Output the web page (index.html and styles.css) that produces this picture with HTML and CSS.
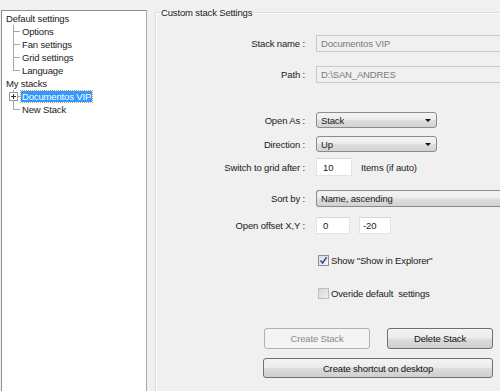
FILE: index.html
```html
<!DOCTYPE html>
<html>
<head>
<meta charset="utf-8">
<link rel="stylesheet" href="styles.css">
</head>
<body>
<div class="window">
  <div class="tree">
    <ul class="root">
      <li class="node">Default settings
        <ul class="children">
          <li>Options</li>
          <li>Fan settings</li>
          <li>Grid settings</li>
          <li>Language</li>
        </ul>
      </li>
      <li class="node">My stacks
        <ul class="children">
          <li class="has-box"><span class="plus"></span><span class="sel">Documentos VIP</span></li>
          <li>New Stack</li>
        </ul>
      </li>
    </ul>
  </div>

  <fieldset class="group">
    <legend class="group-title">Custom stack Settings</legend>
    <div class="form">
      <div class="row r-name">
        <span class="label">Stack name :</span>
        <span class="input disabled wide">Documentos VIP</span>
      </div>
      <div class="row r-path">
        <span class="label">Path :</span>
        <span class="input disabled wide">D:\SAN_ANDRES</span>
      </div>
      <div class="row r-open">
        <span class="label">Open As :</span>
        <span class="combo"><span class="combo-text">Stack</span><span class="arrow"></span></span>
      </div>
      <div class="row r-dir">
        <span class="label">Direction :</span>
        <span class="combo"><span class="combo-text">Up</span><span class="arrow"></span></span>
      </div>
      <div class="row r-grid">
        <span class="label">Switch to grid after :</span>
        <span class="ctrls">
          <span class="input num">10</span>
          <span class="suffix">Items (if auto)</span>
        </span>
      </div>
      <div class="row r-sort">
        <span class="label">Sort by :</span>
        <span class="combo wide"><span class="combo-text">Name, ascending</span></span>
      </div>
      <div class="row r-offset">
        <span class="label">Open offset X,Y :</span>
        <span class="ctrls gap9">
          <span class="input offx">0</span>
          <span class="input offy">-20</span>
        </span>
      </div>
      <div class="row r-check1">
        <span class="label"></span>
        <span class="check-line">
          <span class="check checked"><svg width="9" height="9" viewBox="0 0 9 9"><path d="M1.5 4.6 L3.6 7 L7.6 1.3" fill="none" stroke="#2a4aa8" stroke-width="1.5"/></svg></span>
          <span class="check-text">Show "Show in Explorer"</span>
        </span>
      </div>
      <div class="row r-check2">
        <span class="label"></span>
        <span class="check-line">
          <span class="check off"></span>
          <span class="check-text">Overide default &nbsp;settings</span>
        </span>
      </div>
      <div class="buttons">
        <div class="btn-row">
          <span class="btn disabled-btn">Create Stack</span>
          <span class="btn">Delete Stack</span>
        </div>
        <span class="btn full">Create shortcut on desktop</span>
      </div>
    </div>
  </fieldset>
</div>
</body>
</html>
```

FILE: styles.css
```css
* { box-sizing: border-box; }
html, body {
  margin: 0;
  padding: 0;
  width: 500px;
  height: 391px;
  overflow: hidden;
  background: #f0f0f0;
}
body {
  font-family: "Liberation Sans", Arial, sans-serif;
  font-size: 9.5px;
  letter-spacing: -0.15px;
  color: #1a1a1a;
}
.window {
  display: flex;
  align-items: flex-start;
}

/* ---------- tree ---------- */
.tree {
  margin-left: 1px;
  margin-top: 10px;
  width: 146px;
  height: 381px;
  background: #fff;
  border: 1px solid #8f8f8f;
  border-right-color: #a9a9a9;
  border-bottom: none;
  padding-top: 1px;
  flex: none;
}
.tree ul {
  list-style: none;
  margin: 0;
  padding: 0;
}
.root {
  padding-left: 4px !important;
}
.tree li {
  line-height: 13px;
  white-space: nowrap;
}
.children {
  position: relative;
  padding-left: 16px !important;
}
.children::before {
  content: "";
  position: absolute;
  left: 7px;
  top: 0;
  bottom: 6px;
  border-left: 1px solid #a7a7a7;
}
.children li {
  position: relative;
}
.children li::before {
  content: "";
  position: absolute;
  left: -9px;
  top: 6px;
  width: 7px;
  border-top: 1px solid #a7a7a7;
}
.plus {
  position: absolute;
  left: -13px;
  top: 2px;
  width: 9px;
  height: 9px;
  background: #fff;
  border: 1px solid #9a9a9a;
  z-index: 1;
}
.plus::before, .plus::after {
  content: "";
  position: absolute;
  background: #333;
}
.plus::before { left: 1px; top: 3px; width: 5px; height: 1px; }
.plus::after { left: 3px; top: 1px; width: 1px; height: 5px; }
.sel {
  display: inline-block;
  background: #3399ff;
  color: #fff;
  line-height: 11px;
  padding: 0 1px;
  margin-left: -1px;
  outline: 1px dotted #bba46a;
  vertical-align: top;
  margin-top: 1px;
}

/* ---------- group ---------- */
.group {
  margin: 7px 0 0 8px;
  padding: 0;
  width: 345px;
  height: 384px;
  border: 1px solid #d5dfe5;
  border-right: none;
  border-bottom: none;
  box-shadow: inset 1px 1px 0 #fff;
  flex: none;
  min-width: 0;
}
.group-title {
  margin-left: 4px;
  padding: 0 1px;
  line-height: 11px;
}
.form {
  padding-top: 17px;
}
.row {
  display: flex;
  align-items: center;
  height: 17px;
}
.label {
  width: 149px;
  text-align: right;
  margin-right: 11px;
  flex: none;
  white-space: nowrap;
}
.r-path { margin-top: 14px; }
.r-open { margin-top: 29px; height: 16px; }
.r-dir { margin-top: 8px; height: 16px; }
.r-grid { margin-top: 6px; height: 18px; }
.r-sort { margin-top: 14px; }
.r-offset { margin-top: 10px; }
.r-check1 { margin-top: 21px; height: 11px; }
.r-check2 { margin-top: 22px; height: 11px; }

.input {
  display: flex;
  align-items: center;
  height: 100%;
  padding-left: 4px;
  background: #fff;
  border: 1px solid #e1e3e8;
  border-top-color: #d3d6db;
  white-space: nowrap;
}
.input.disabled {
  background: #f0f0f0;
  border: 1px solid #c7c9cc;
  color: #7a7a7a;
}
.wide { width: 184px; border-right: none !important; }
.num { width: 36px; padding-left: 6px; }
.offx { width: 34px; padding-left: 6px; }
.offy { width: 32px; padding-left: 3px; }
.ctrls {
  display: flex;
  align-items: center;
  height: 100%;
}
.suffix { margin-left: 9px; }
.gap9 { gap: 9px; }

.combo {
  display: flex;
  align-items: center;
  width: 121px;
  height: 100%;
  border: 1px solid #8b8b8b;
  border-radius: 3px;
  background: linear-gradient(#f4f4f4 0%, #ececec 48%, #dedede 52%, #d2d2d2 100%);
  padding: 0 5px 0 4px;
}
.combo.wide {
  width: 184px;
  border-top-right-radius: 0;
  border-bottom-right-radius: 0;
}
.combo-text { flex: 1; }
.arrow {
  width: 0;
  height: 0;
  border-left: 3px solid transparent;
  border-right: 3px solid transparent;
  border-top: 3px solid #111;
}

.check-line {
  display: flex;
  align-items: center;
  margin-left: 2px;
}
.check {
  width: 11px;
  height: 11px;
  border: 1px solid #8f8f8f;
  background: linear-gradient(135deg, #dcdcdc, #f6f6f6);
  display: flex;
  align-items: center;
  justify-content: center;
  flex: none;
}
.check.off {
  border-color: #bdbdbd;
  background: linear-gradient(135deg, #dadada, #eeeeee);
}
.check-text { margin-left: 2px; }

.buttons {
  margin-top: 29px;
  margin-left: 107px;
  width: 230px;
  display: flex;
  flex-direction: column;
  gap: 9px;
}
.btn-row {
  display: flex;
  justify-content: space-between;
  padding-left: 1px;
}
.btn {
  display: flex;
  align-items: center;
  justify-content: center;
  width: 106px;
  height: 21px;
  border: 1px solid #707070;
  border-radius: 3px;
  background: linear-gradient(#f3f3f3 0%, #ebebeb 48%, #dddddd 52%, #cfcfcf 100%);
  color: #111;
}
.btn.full { width: 230px; height: 20px; }
.disabled-btn {
  border-color: #adb2b5;
  background: #f4f4f4;
  color: #8a8a8a;
}
```
